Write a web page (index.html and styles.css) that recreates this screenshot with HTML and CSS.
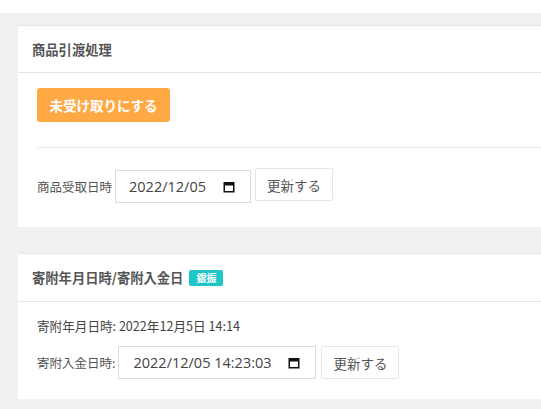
FILE: index.html
```html
<!DOCTYPE html>
<html lang="ja">
<head>
<meta charset="utf-8">
<link rel="stylesheet" href="styles.css">
</head>
<body>
<div class="page">
  <section class="card card-first">
    <div class="card-header">商品引渡処理</div>
    <div class="card-body">
      <button class="btn-orange">未受け取りにする</button>
      <hr class="sep">
      <div class="form-row">
        <span class="label">商品受取日時</span>
        <div class="date-input w1">
          <span class="date-text">2022/12/05</span>
          <svg class="cal" width="12" height="12" viewBox="0 0 12 12"><rect x="1.25" y="1.75" width="9.5" height="9" fill="none" stroke="#111" stroke-width="1.5"/><rect x="1" y="1.5" width="10" height="3" fill="#111"/></svg>
        </div>
        <button class="btn-light up">更新する</button>
      </div>
    </div>
  </section>

  <section class="card card-second">
    <div class="card-header">寄附年月日時/寄附入金日<span class="badge">銀振</span></div>
    <div class="card-body body2">
      <div class="info">寄附年月日時: 2022年12月5日 14:14</div>
      <div class="form-row row2">
        <span class="label">寄附入金日時:</span>
        <div class="date-input w2">
          <span class="date-text">2022/12/05 14:23:03</span>
          <svg class="cal" width="12" height="12" viewBox="0 0 12 12"><rect x="1.25" y="1.75" width="9.5" height="9" fill="none" stroke="#111" stroke-width="1.5"/><rect x="1" y="1.5" width="10" height="3" fill="#111"/></svg>
        </div>
        <button class="btn-light">更新する</button>
      </div>
    </div>
  </section>
</div>
</body>
</html>
```
FILE: styles.css
```css
html, body {
  margin: 0;
  padding: 0;
  background: #ffffff;
  overflow: hidden;
  height: 409px;
}
body {
  font-family: "Open Sans", "Noto Sans CJK JP", sans-serif;
  color: #555;
}
.page {
  margin-top: 13px;
  background: #f1f1f1;
  padding: 12px 0 30px 18px;
  height: 400px;
  box-sizing: border-box;
}
.card {
  background: #fff;
  border-top: 1px solid #e6e6e6;
}
.card-second {
  margin-top: 26px;
}
.card-header {
  height: 47px;
  border-bottom: 1px solid #e6e6e6;
  display: flex;
  align-items: center;
  padding-left: 14px;
  font-family: "Noto Sans CJK JP", sans-serif;
  font-size: 13.3px;
  font-weight: bold;
  color: #555;
  box-sizing: border-box;
}
.card-second .card-header {
  height: 48px;
}
.card-body {
  padding: 15px 0 24px 19px;
}
.btn-orange {
  display: block;
  width: 133px;
  height: 34px;
  background: #ffa945;
  border: none;
  border-radius: 3px;
  color: #fff;
  font-family: "Noto Sans CJK JP", sans-serif;
  font-size: 13.5px;
  font-weight: bold;
  padding: 0;
}
.sep {
  border: none;
  border-top: 1px solid #e8e8e8;
  margin: 25px 0 22px 0;
}
.form-row {
  display: flex;
  align-items: flex-start;
}
.label {
  font-family: "Noto Sans CJK JP", sans-serif;
  font-size: 12.5px;
  color: #555;
  line-height: 33px;
  margin-right: 3px;
}
.date-input {
  height: 33px;
  box-sizing: border-box;
  border: 1px solid #dcdcdc;
  display: flex;
  align-items: center;
  justify-content: space-between;
  padding: 0 15px 0 13px;
  font-size: 14.5px;
  color: #444;
}
.w1 { width: 136px; }
.w2 { width: 198px; padding-left: 14px; }
.cal { display: block; }
.btn-light {
  height: 33px;
  width: 78px;
  box-sizing: border-box;
  margin-left: 4px;
  background: #fff;
  border: 1px solid #e6e6e6;
  border-radius: 2px;
  font-family: "Noto Sans CJK JP", sans-serif;
  font-size: 13.5px;
  color: #555;
  padding: 0;
}
.btn-light.up {
  margin-top: -2px;
}
.body2 {
  padding: 15px 0 20px 19px;
}
.info {
  font-size: 12.6px;
  line-height: 18px;
  color: #444;
  font-family: "Noto Sans CJK JP", sans-serif;
}
.row2 {
  margin-top: 11px;
}
.row2 .label {
  margin-right: 3px;
}
.row2 .btn-light {
  margin-left: 5px;
}
.badge {
  display: inline-block;
  background: #1ec6c8;
  color: #fff;
  font-size: 10px;
  font-weight: bold;
  border-radius: 2px;
  width: 34px;
  text-align: center;
  height: 16px;
  line-height: 16px;
  margin-left: 6px;
}
```
